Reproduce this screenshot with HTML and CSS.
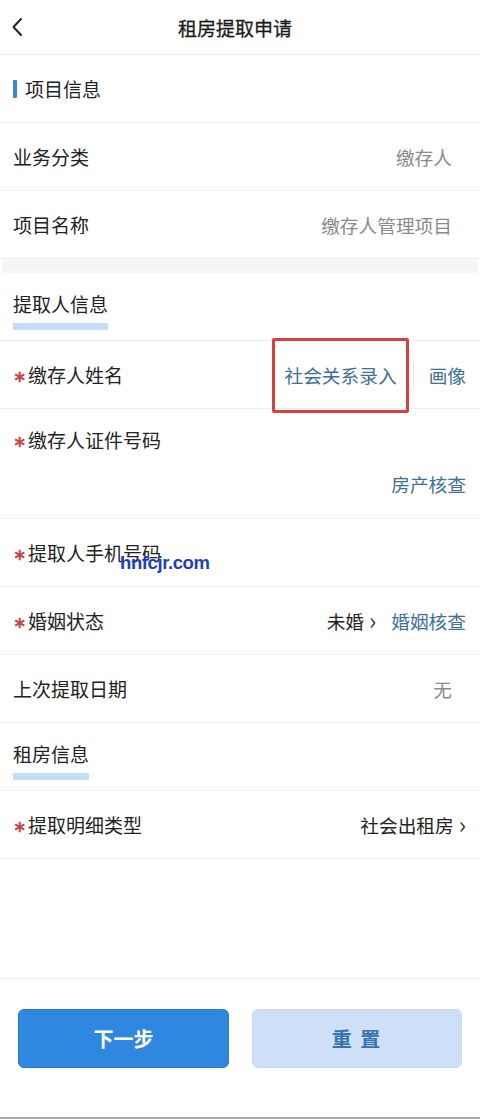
FILE: index.html
```html
<!DOCTYPE html>
<html lang="zh-CN">
<head>
<meta charset="utf-8">
<title>租房提取申请</title>
<link rel="stylesheet" href="styles.css">
</head>
<body>
<div class="page">
  <header class="topbar">
    <svg class="back" width="12" height="20" viewBox="0 0 12 20"><path d="M10 2 L2.5 10 L10 18" fill="none" stroke="#222" stroke-width="2" stroke-linecap="round" stroke-linejoin="round"/></svg>
    <div class="title">租房提取申请</div>
  </header>

  <div class="row head-bar"><span class="bar"></span><span class="head-text">项目信息</span></div>
  <div class="row"><span class="label">业务分类</span><span class="value grey">缴存人</span></div>
  <div class="row"><span class="label">项目名称</span><span class="value grey">缴存人管理项目</span></div>

  <div class="band"></div>

  <div class="row head-line"><span class="uline">提取人信息</span></div>
  <div class="row">
    <span class="label"><i class="req">∗</i>缴存人姓名</span>
    <span class="actions"><span class="link">社会关系录入</span><span class="vsep"></span><span class="link">画像</span></span>
    <span class="redbox"></span>
  </div>
  <div class="row tall">
    <span class="label"><i class="req">∗</i>缴存人证件号码</span>
    <span class="link below">房产核查</span>
  </div>
  <div class="row">
    <span class="label"><i class="req">∗</i>提取人手机号码</span>
    <span class="watermark">hnfcjr.com</span>
  </div>
  <div class="row">
    <span class="label"><i class="req">∗</i>婚姻状态</span>
    <span class="actions"><span class="dark">未婚</span><span class="chev">›</span><span class="link gap">婚姻核查</span></span>
  </div>
  <div class="row"><span class="label">上次提取日期</span><span class="value grey">无</span></div>
  <div class="row head-line"><span class="uline">租房信息</span></div>
  <div class="row">
    <span class="label"><i class="req">∗</i>提取明细类型</span>
    <span class="actions"><span class="dark">社会出租房</span><span class="chev">›</span></span>
  </div>

  <div class="spacer"></div>

  <footer class="footer">
    <button class="btn primary">下一步</button>
    <button class="btn secondary">重 置</button>
  </footer>
</div>
</body>
</html>
```

FILE: styles.css
```css
* { box-sizing: border-box; }
html, body { margin: 0; padding: 0; background: #fff; }
body {
  font-family: "Noto Sans CJK SC", "Noto Sans", sans-serif;
  color: #222;
  width: 480px;
  height: 1119px;
  overflow: hidden;
}
.page {
  height: 1119px;
  display: flex;
  flex-direction: column;
  border-bottom: 2px solid #a8a8a8;
}
.topbar {
  height: 55px;
  border-bottom: 1px solid #ececec;
  display: flex;
  align-items: center;
  justify-content: center;
  position: relative;
  flex-shrink: 0;
}
.back { position: absolute; left: 11px; top: 17px; }
.title { font-size: 19px; font-weight: 400; margin-left: -10px; color: #1a1a1a; -webkit-text-stroke: 0.3px #1a1a1a; }

.row {
  height: 68px;
  border-bottom: 1px solid #eeeeee;
  display: flex;
  align-items: center;
  justify-content: space-between;
  padding: 0 14px 0 13px;
  position: relative;
  flex-shrink: 0;
}
.label { font-size: 19px; color: #222; display: flex; align-items: center; }
.req {
  font-style: normal;
  color: #c8464a;
  font-size: 16px;
  width: 15px;
  font-weight: 700;
  display: inline-block;
}
.value { font-size: 18.7px; }
.grey { color: #8a8a8a; margin-right: 14px; }

.head-bar { justify-content: flex-start; }
.bar { width: 4px; height: 18px; background: #3a86d5; border-radius: 1px; margin-right: 8px; }
.head-text { font-size: 19px; }

.band {
  height: 14px;
  margin: 0 2px;
  background: linear-gradient(#f9f9f9, #f3f3f3 50%, #f8f8f8);
  flex-shrink: 0;
}

.head-line { justify-content: flex-start; align-items: flex-start; padding-top: 17px; }
.uline {
  font-size: 19px;
  line-height: 28px;
  padding-bottom: 5px;
  border-bottom: 7px solid #c6ddf6;
}

.actions { display: flex; align-items: center; }
.link { font-size: 18.7px; color: #3f6f98; }
.vsep { width: 1px; height: 24px; background: #e6e6e6; margin: 0 15px 0 16px; }
.dark { font-size: 18.7px; color: #222; }
.chev { font-size: 24px; color: #333; margin-left: 5px; line-height: 1; position: relative; top: -1px; }
.gap { margin-left: 15px; }

.tall { height: 110px; align-items: flex-start; padding-top: 17px; flex-direction: column; justify-content: flex-start; }
.tall .below { align-self: flex-end; margin-top: 17px; }

.redbox {
  position: absolute;
  left: 272px;
  top: -3px;
  width: 137px;
  height: 75px;
  border: 3px solid #d83f3f;
  border-radius: 2px;
}
.watermark {
  position: absolute;
  left: 120px;
  top: 33px;
  font-family: "Liberation Sans", Arial, sans-serif;
  font-weight: 700;
  font-size: 18.5px;
  color: #1d3fb8;
  letter-spacing: -0.4px;
}

.spacer { flex: 1; border-bottom: 1px solid #f3f3f3; min-height: 119px; max-height: 120px; }

.footer {
  display: flex;
  gap: 23px;
  padding: 30px 18px 0 18px;
  flex-shrink: 0;
}
.btn {
  width: 211px;
  height: 59px;
  border-radius: 6px;
  font-family: "Noto Sans CJK SC", sans-serif;
  font-size: 20px;
  font-weight: 700;
  cursor: pointer;
}
.primary { background: #2f87df; border: 1px solid #2a7acb; color: #fff; }
.secondary { background: #cde0f7; border: 1px solid #c6daf2; color: #3a72ae; width: 210px; letter-spacing: 2px; }
```
